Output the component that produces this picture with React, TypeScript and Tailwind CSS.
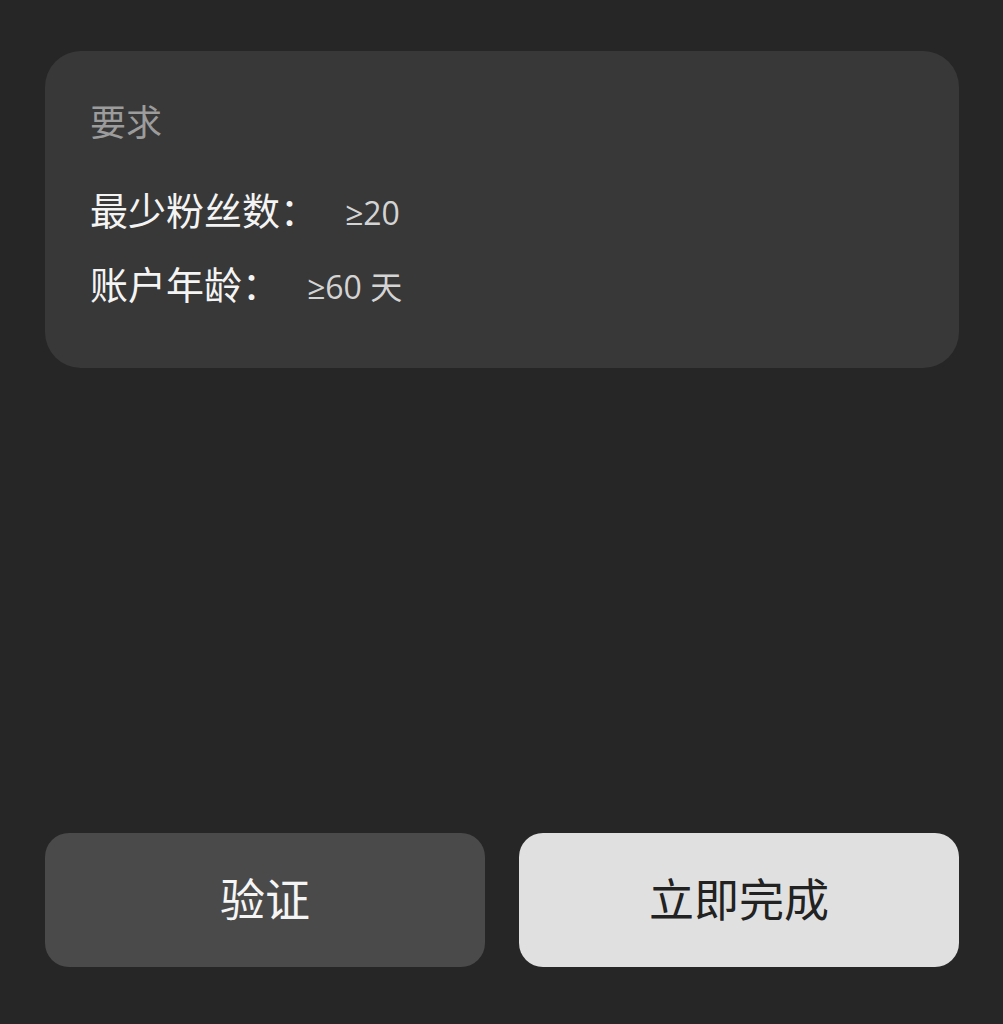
import React from "react";

const font = { fontFamily: '"Noto Sans", "Noto Sans CJK SC", sans-serif' };

function Row({ label, value }: { label: string; value: string }) {
  return (
    <div className="flex items-baseline">
      <span className="text-[38px] leading-[46px] text-[#f4f4f4]">{label}</span>
      <span
        style={{ fontFamily: '"Open Sans", "DejaVu Sans", "Noto Sans CJK SC", sans-serif' }}
        className="ml-[27px] text-[32px] leading-[46px] text-[#d4d4d4]"
      >
        {value}
      </span>
    </div>
  );
}

export default function App() {
  return (
    <div
      style={font}
      className="h-[1024px] w-full bg-[#262626] pl-[45px] pr-[44px] pt-[51px] pb-[57px] flex flex-col justify-between"
    >
      {/* Requirements card */}
      <div className="h-[317px] rounded-[36px] bg-[#383838] pl-[45px] pt-[44px] flex flex-col">
        <div className="text-[36px] leading-[56px] text-[#9c9c9c]">要求</div>
        <div className="mt-[36px] flex flex-col gap-[25px]">
          <Row label="最少粉丝数：" value="≥20" />
          <Row label="账户年龄：" value="≥60 天" />
        </div>
      </div>

      {/* Actions */}
      <div className="grid grid-cols-2 gap-[34px]">
        <button className="h-[134px] rounded-[24px] bg-[#4a4a4a] text-[45px] text-[#f5f5f5]">
          验证
        </button>
        <button className="h-[134px] rounded-[24px] bg-[#e0e0e0] text-[45px] text-[#222222]">
          立即完成
        </button>
      </div>
    </div>
  );
}
